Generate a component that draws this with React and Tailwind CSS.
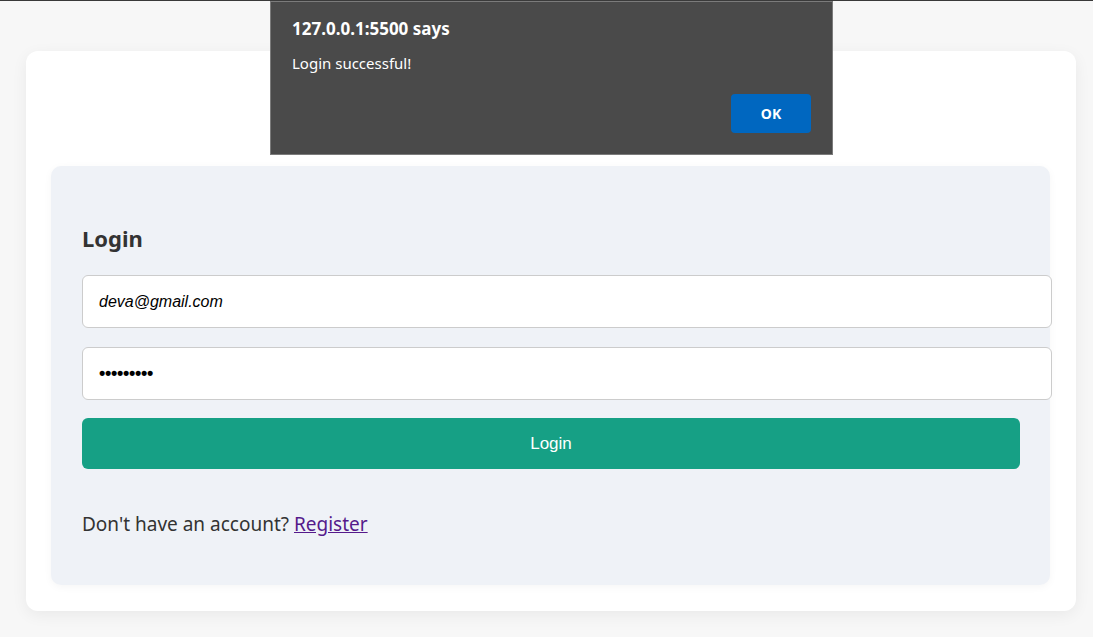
import React from "react";

const ui = { fontFamily: '"Noto Sans", "Open Sans", sans-serif' };
const arial = { fontFamily: '"Liberation Sans", Arial, sans-serif' };

function AlertDialog() {
  return (
    <div
      className="absolute left-[270px] top-0 h-[154px] w-[563px] border border-[#7b7b7b] bg-[#4a4a4a] text-white"
      style={ui}
    >
      <div className="px-[21px] pt-[15px] text-[17px] font-bold leading-[24px]">127.0.0.1:5500 says</div>
      <div className="px-[21px] pt-[12px] text-[15px] leading-[20px]">Login successful!</div>
      <div className="flex justify-end px-[21px] pt-[21px]">
        <button
          type="button"
          className="h-[39px] w-[80px] rounded-[4px] bg-[#0067c0] text-[14px] font-bold text-white"
        >
          OK
        </button>
      </div>
    </div>
  );
}

export default function App() {
  return (
    <div className="relative h-[637px] overflow-hidden border-t border-[#3a3a3a] bg-[#f7f7f7]" style={ui}>
      <div className="ml-[26px] mt-[50px] h-[560px] w-[1050px] rounded-[12px] bg-white px-[25px] pt-[115px] shadow-[0_4px_16px_rgba(0,0,0,0.06)]">
        <div className="h-[419px] w-[999px] rounded-[10px] bg-[#eff2f7] pl-[31px] pr-[30px] pt-[58px] shadow-[0_2px_8px_rgba(0,0,0,0.04)]">
          <h2 className="text-[22px] font-bold leading-[28px] text-[#333]">Login</h2>
          <div className="mt-[23px] flex w-[970px] flex-col gap-[19px]">
            <div
              className="flex h-[53px] items-center rounded-[6px] border border-[#cccccc] bg-white px-[16px] text-[16px] italic text-black"
              style={arial}
            >
              deva@gmail.com
            </div>
            <div className="flex h-[53px] items-center rounded-[6px] border border-[#cccccc] bg-white px-[16px]">
              <span className="text-[18px] font-bold tracking-[-0.3px] text-black" style={arial}>
                •••••••••
              </span>
            </div>
          </div>
          <button
            type="button"
            className="mt-[18px] h-[51px] w-[938px] rounded-[6px] bg-[#16a085] text-[17px] text-white"
            style={arial}
          >
            Login
          </button>
          <p className="mt-[42px] text-[19px] leading-[26px] text-[#333]">
            Don't have an account?{" "}
            <a href="#" className="text-[#551a8b] underline">
              Register
            </a>
          </p>
        </div>
      </div>
      <AlertDialog />
    </div>
  );
}
